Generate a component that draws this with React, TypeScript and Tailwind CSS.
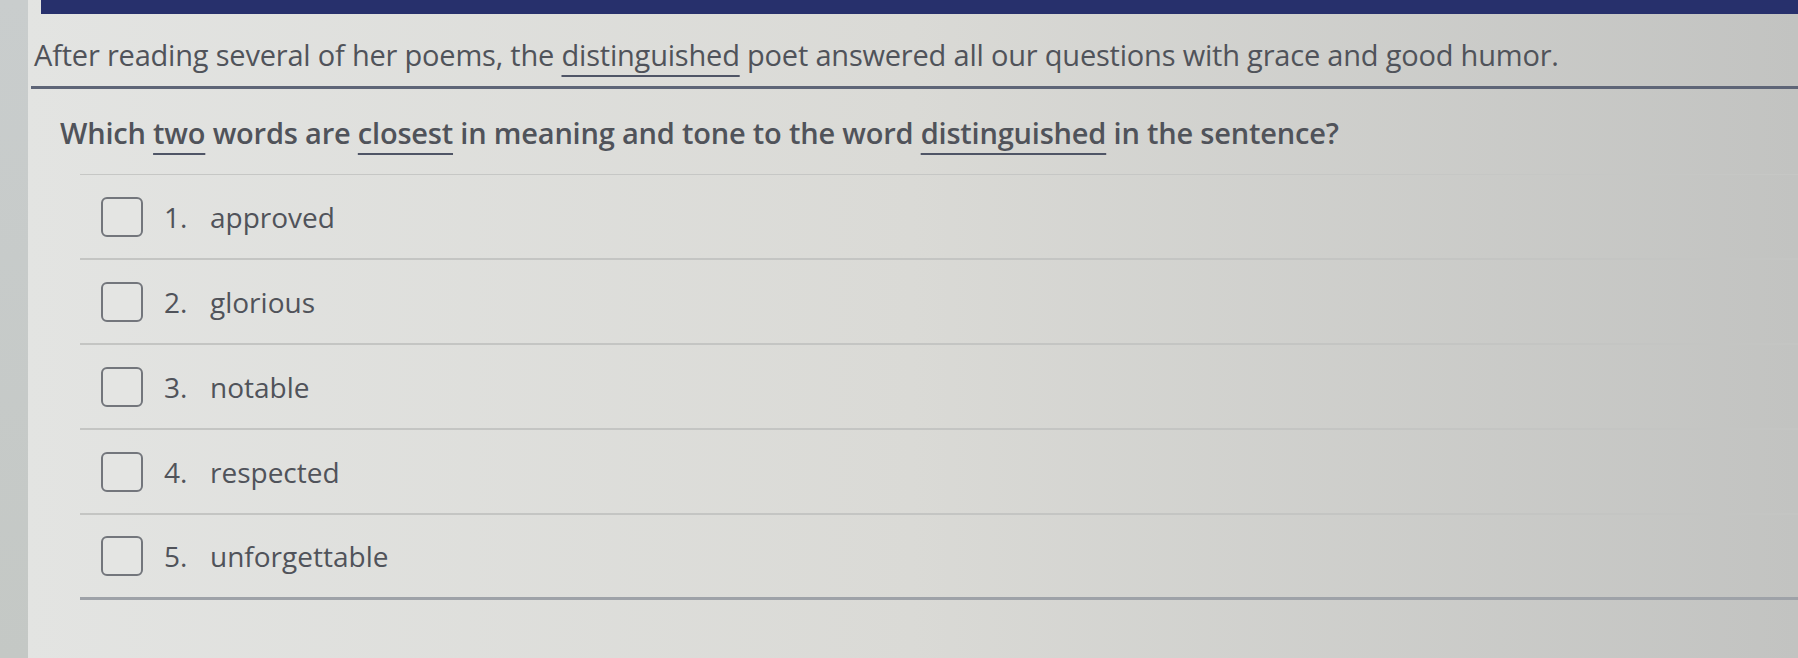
import React from "react";

const options = ["approved", "glorious", "notable", "respected", "unforgettable"];

function U({ children }: { children: React.ReactNode }) {
  return (
    <span className="underline decoration-[2px] underline-offset-[9px] decoration-[#4f5566]">{children}</span>
  );
}

export default function App() {
  return (
    <div
      className="w-[1798px] h-[658px] flex overflow-hidden text-[#50535a]"
      style={{ fontFamily: '"Open Sans", "Noto Sans", sans-serif' }}
    >
      <div className="w-[28px] h-full bg-linear-to-b from-[#c9cdcd] to-[#c4c8c5]" />
      <div className="flex-1 flex flex-col bg-linear-to-r from-[#e3e4e2] via-[#dadad6] to-[#c2c3c1]">
        <div className="h-[14px] ml-[13px] bg-[#27306c]" />
        <div className="pl-[6px] pt-[24px] h-[72px] text-[29px] font-medium leading-[34px] tracking-[-0.2px] whitespace-nowrap">
          After reading several of her poems, the <U>distinguished</U> poet answered all our questions with grace and good humor.
        </div>
        <div className="h-[3px] ml-[3px] bg-[#5e6577]" />
        <div className="pl-[32px] pt-[27px] h-[85px] text-[29px] font-semibold leading-[34px] tracking-[-0.2px] whitespace-nowrap">
          Which <U>two</U> words are <U>closest</U> in meaning and tone to the word <U>distinguished</U> in the sentence?
        </div>
        <div className="ml-[52px] border-t border-[#c6c7c5]">
          {options.map((o, i) => (
            <div
              key={o}
              className={
                "h-[85px] flex items-center " +
                (i === options.length - 1 ? "border-b-[3px] border-[#9ea2a8]" : "border-b-2 border-[#c4c5c3]")
              }
            >
              <div className="ml-[21px] w-[42px] h-[40px] border-2 border-[#73767c] rounded-[6px] bg-[#e4e5e3]" />
              <span className="ml-[21px] w-[46px] text-[28px] font-medium">{i + 1}.</span>
              <span className="text-[28px] font-medium">{o}</span>
            </div>
          ))}
        </div>
      </div>
    </div>
  );
}
